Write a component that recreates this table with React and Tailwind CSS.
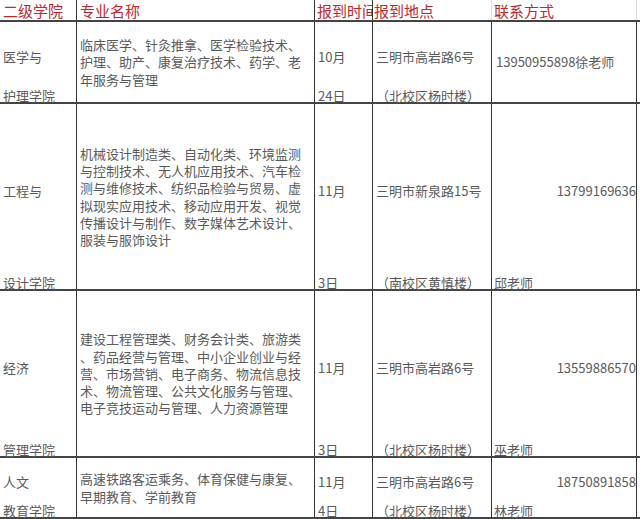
import React from "react";

const font = { fontFamily: '"Noto Sans CJK SC", "Noto Sans", sans-serif' };

const rows = [
  {
    h: "h-[82px]",
    college: ["医学与", "护理学院"],
    majors: [
      "临床医学、针灸推拿、医学检验技术、",
      "护理、助产、康复治疗技术、药学、老",
      "年服务与管理",
    ],
    date: ["10月", "24日"],
    place: ["三明市高岩路6号", "（北校区杨时楼）"],
    single: "13950955898徐老师",
  },
  {
    h: "h-[187px]",
    college: ["工程与", "设计学院"],
    majors: [
      "机械设计制造类、自动化类、环境监测",
      "与控制技术、无人机应用技术、汽车检",
      "测与维修技术、纺织品检验与贸易、虚",
      "拟现实应用技术、移动应用开发、视觉",
      "传播设计与制作、数字媒体艺术设计、",
      "服装与服饰设计",
    ],
    date: ["11月", "3日"],
    place: ["三明市新泉路15号", "（南校区黄慎楼）"],
    phone: "13799169636",
    teacher: "邱老师",
  },
  {
    h: "h-[167px]",
    college: ["经济", "管理学院"],
    majors: [
      "建设工程管理类、财务会计类、旅游类",
      "、药品经营与管理、中小企业创业与经",
      "营、市场营销、电子商务、物流信息技",
      "术、物流管理、公共文化服务与管理、",
      "电子竞技运动与管理、人力资源管理",
    ],
    date: ["11月", "3日"],
    place: ["三明市高岩路6号", "（北校区杨时楼）"],
    phone: "13559886570",
    teacher: "巫老师",
  },
  {
    h: "h-[61px]",
    college: ["人文", "教育学院"],
    majors: ["高速铁路客运乘务、体育保健与康复、", "早期教育、学前教育"],
    date: ["11月", "4日"],
    place: ["三明市高岩路6号", "（北校区杨时楼）"],
    phone: "18750891858",
    teacher: "林老师",
  },
];

const TwoLine = ({ top, bottom, className = "" }) => (
  <div className={"flex flex-col h-full " + className}>
    <div className="flex-1 flex items-center leading-[17px] whitespace-nowrap">{top}</div>
    <div className="leading-[12px] whitespace-nowrap">{bottom}</div>
  </div>
);

export default function App() {
  return (
    <div className="w-[640px] h-[519px] bg-white overflow-hidden text-[13px] text-[#5a5a5a]" style={font}>
      <div className="grid grid-cols-[77px_238px_58px_119px_145px] h-[22px] border-b-2 border-[#444] text-[15px] text-[#c3262c] leading-[21px]">
        <div className="border-r border-[#333] pl-[3px] whitespace-nowrap overflow-hidden">二级学院</div>
        <div className="border-r border-[#333] pl-[3px] whitespace-nowrap overflow-hidden">专业名称</div>
        <div className="border-r border-[#333] pl-[2px] whitespace-nowrap overflow-hidden">报到时间</div>
        <div className="border-r border-[#ddd] pl-[1px] whitespace-nowrap overflow-hidden">报到地点</div>
        <div className="border-r border-[#ddd] pl-[2px] whitespace-nowrap overflow-hidden">联系方式</div>
      </div>
      {rows.map((r, i) => (
        <div
          key={i}
          className={"grid grid-cols-[77px_238px_58px_119px_145px] border-b-2 border-[#444] " + r.h}
        >
          <div className="border-r border-[#333] pl-[3px]">
            <TwoLine top={r.college[0]} bottom={r.college[1]} />
          </div>
          <div className="border-r border-[#333] pl-[3px] flex flex-col justify-center leading-[17.3px]">
            {r.majors.map((m, j) => (
              <div key={j} className="whitespace-nowrap">{m}</div>
            ))}
          </div>
          <div className="border-r border-[#333] pl-[3px]">
            <TwoLine top={r.date[0]} bottom={r.date[1]} />
          </div>
          <div className="border-r border-[#333] pl-[3px]">
            <TwoLine top={r.place[0]} bottom={r.place[1]} />
          </div>
          <div className="border-r border-[#333]">
            {r.single ? (
              <div className="h-full flex items-center pl-[4px] whitespace-nowrap">{r.single}</div>
            ) : (
              <div className="flex flex-col h-full">
                <div className="flex-1 flex items-center justify-end leading-[17px]">{r.phone}</div>
                <div className="leading-[12px] pl-[2px]">{r.teacher}</div>
              </div>
            )}
          </div>
        </div>
      ))}
    </div>
  );
}
